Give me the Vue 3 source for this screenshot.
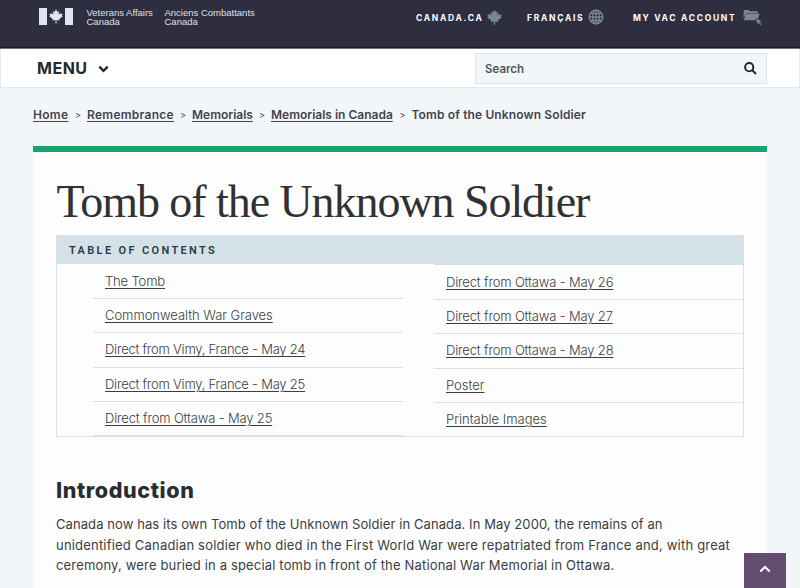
<template>
  <div class="page">
    <header class="top-bar">
      <div class="brand">
        <svg class="flag" viewBox="0 0 34 17" aria-hidden="true">
          <path d="M0 0h8v17H0zM26 0h8v17h-8z" />
          <path :d="leaf" transform="translate(10.3 1.2) scale(.56)" />
        </svg>
        <span class="brand-en">Veterans Affairs<br />Canada</span>
        <span class="brand-fr">Anciens Combattants<br />Canada</span>
      </div>
      <nav class="top-links">
        <a href="#" class="link-canada">
          <span>CANADA.CA</span>
          <svg class="icon-leaf" viewBox="0 0 24 26" aria-hidden="true"><path :d="leaf" /></svg>
        </a>
        <a href="#" class="link-lang">
          <span>FRANÇAIS</span>
          <svg class="icon-globe" viewBox="0 0 16 16" aria-hidden="true">
            <circle cx="8" cy="8" r="6.8" />
            <ellipse cx="8" cy="8" rx="3.4" ry="6.8" />
            <path d="M8 1v14M1 8h14M2.2 4.6h11.6M2.2 11.4h11.6" />
          </svg>
        </a>
        <a href="#" class="link-account">
          <span>MY VAC ACCOUNT</span>
          <svg class="icon-folder" viewBox="0 0 20 17" aria-hidden="true">
            <path d="M.6 9V2.2Q.6 1 1.8 1h3.6l1.2 1.3h7q1 0 1 1v.8H4.2q-1 0-1.3.9z" />
            <path d="M4.5 4.5h11.2q1 0 .7.9l-1.8 5q-.3.9-1.2.9H1.7q-1 0-.7-.9l2-5.1q.4-.8 1.5-.8z" />
            <path class="cursor" d="M12.8 9.2l6.4 2.7-2.3 1 2 2.3-1.4 1.2-2-2.4-1.3 2.1z" />
          </svg>
        </a>
      </nav>
    </header>

    <div class="menu-bar">
      <button class="menu-button" type="button">
        <span>MENU</span>
        <svg class="icon-down" viewBox="0 0 10 7" aria-hidden="true"><path d="M1.2 1.4L5 5.1l3.8-3.7" /></svg>
      </button>
      <form class="search" @submit.prevent>
        <input v-model="query" type="text" placeholder="Search" aria-label="Search" />
        <svg class="icon-search" viewBox="0 0 13 13" aria-hidden="true">
          <circle cx="5.2" cy="5.2" r="4.1" />
          <path d="M8.3 8.3l3.7 3.7" />
        </svg>
      </form>
    </div>

    <nav class="breadcrumbs">
      <template v-for="crumb in crumbs" :key="crumb.label">
        <a href="#" :class="crumb.cls">{{ crumb.label }}</a>
        <span class="separator">&gt;</span>
      </template>
      <span class="current">Tomb of the Unknown Soldier</span>
    </nav>

    <main class="content">
      <h1>Tomb of the Unknown Soldier</h1>
      <section class="toc">
        <h2>TABLE OF CONTENTS</h2>
        <div class="toc-columns">
          <ul v-for="(column, i) in toc" :key="i">
            <li v-for="item in column" :key="item.label" :class="item.cls"><a href="#">{{ item.label }}</a></li>
          </ul>
        </div>
      </section>
      <h2 class="intro-title">Introduction</h2>
      <p class="intro">
        <span class="line-1">Canada now has its own Tomb of the Unknown Soldier in Canada. In May 2000, the remains of an</span>
        <span class="line-2">unidentified Canadian soldier who died in the First World War were repatriated from France and, with great</span>
        <span class="line-3">ceremony, were buried in a special tomb in front of the National War Memorial in Ottawa.</span>
      </p>
    </main>

    <a href="#" class="to-top" aria-label="Back to top">
      <svg viewBox="0 0 12 8" aria-hidden="true"><path d="M1.2 6.4L6 1.9l4.8 4.5" /></svg>
    </a>
  </div>
</template>

<script setup>
import { ref } from 'vue';

const query = ref('');

const leaf =
  'M12 0l2.5 4.8 3-1.4-1.3 6.5 3.2-3.2.8 2 3.6-.6-1.3 3.8 1.5.9-6.4 5.1.8 2.4-5.6-.9.1 6.1h-1.8l.1-6.1-5.6.9.8-2.4L0 12.8l1.5-.9L.2 8.1l3.6.6.8-2 3.2 3.2-1.3-6.5 3 1.4z';

const crumbs = [
  { label: 'Home', cls: 'crumb-home' },
  { label: 'Remembrance', cls: 'crumb-remembrance' },
  { label: 'Memorials', cls: 'crumb-memorials' },
  { label: 'Memorials in Canada', cls: 'crumb-canada' },
];

const toc = [
  [
    { label: 'The Tomb', cls: 'tomb' },
    { label: 'Commonwealth War Graves', cls: 'graves' },
    { label: 'Direct from Vimy, France - May 24', cls: 'vimy' },
    { label: 'Direct from Vimy, France - May 25', cls: 'vimy' },
    { label: 'Direct from Ottawa - May 25', cls: 'ottawa' },
  ],
  [
    { label: 'Direct from Ottawa - May 26', cls: 'ottawa' },
    { label: 'Direct from Ottawa - May 27', cls: 'ottawa' },
    { label: 'Direct from Ottawa - May 28', cls: 'ottawa' },
    { label: 'Poster', cls: 'poster' },
    { label: 'Printable Images', cls: 'images' },
  ],
];
</script>

<style>
body {
  background: #f2f6f9;
  overflow: hidden;
}
</style>

<style scoped>
.page {
  height: 588px;
  overflow: hidden;
  font-family: Inter, 'Liberation Sans', sans-serif;
  color: #3a3d3f;
}

a {
  color: inherit;
}

.top-bar {
  display: flex;
  justify-content: space-between;
  box-sizing: border-box;
  height: 49px;
  padding: 8px 37px 0 39px;
  background: #2f2e41;
  border-bottom: 1px solid #6f707c;
  box-shadow: inset 0 -1px #1c1b2b;
}

.brand {
  display: flex;
  font: 9.5px/9px 'Liberation Sans', sans-serif;
  color: #dce1ea;
}

.flag {
  width: 34px;
  height: 17px;
  margin-right: 13.5px;
  fill: #dfe7ec;
}

.brand-en {
  width: 78px;
}

.top-links {
  display: flex;
}

.top-links a {
  display: flex;
  align-items: center;
  height: 18px;
  font-size: 8.5px;
  font-weight: 700;
  letter-spacing: 1.7px;
  color: #fff;
  text-decoration: none;
  white-space: nowrap;
}

.top-links svg {
  flex: none;
  fill: #7c8796;
}

.link-canada {
  width: 111px;
}

.link-lang {
  width: 106px;
}

.top-links span {
  padding-top: 1px;
}

.link-canada span {
  width: 71px;
}

.link-lang span {
  width: 60.5px;
}

.link-account span {
  width: 110px;
}

.top-links .icon-leaf {
  width: 15px;
  height: 15px;
  stroke: #7c8796;
  stroke-width: 0.8;
}

.top-links .icon-globe {
  width: 16px;
  height: 16px;
  fill: none;
  stroke: #7c8796;
  stroke-width: 1.3;
}

.icon-folder {
  width: 20px;
  height: 17px;
}

.icon-folder .cursor {
  stroke: #2f2e41;
  stroke-width: 0.6;
}

.menu-bar {
  display: flex;
  align-items: center;
  justify-content: space-between;
  box-sizing: border-box;
  height: 39px;
  padding: 0 32px 0 36px;
  background: #fff;
  border: solid #e1eaf0;
  border-width: 0 1px 1px;
}

.menu-button {
  display: flex;
  align-items: center;
  gap: 10.5px;
  padding: 0;
  border: 0;
  background: none;
  font: 700 16px Inter, sans-serif;
  letter-spacing: 0.5px;
  color: #26292c;
}

.icon-down {
  width: 11px;
  height: 8px;
  margin-top: 1px;
  fill: none;
  stroke: #26292c;
  stroke-width: 2.2;
}

.search {
  display: flex;
  align-items: center;
  box-sizing: border-box;
  width: 292px;
  height: 31px;
  padding: 0 9px;
  background: #f2f6f9;
  border: 1px solid #dbe4ea;
}

.search input {
  flex: 1;
  min-width: 0;
  padding: 2px 0 0;
  border: 0;
  outline: 0;
  background: none;
  font: 600 11.5px Inter, sans-serif;
}

.search input::placeholder {
  color: #505459;
  opacity: 1;
}

.icon-search {
  width: 13px;
  height: 13px;
  fill: none;
  stroke: #26292c;
  stroke-width: 2;
}

.breadcrumbs {
  display: flex;
  align-items: center;
  height: 16px;
  padding: 19px 33px 0;
  font-size: 12px;
  line-height: 16px;
  font-weight: 600;
  color: #43434f;
  white-space: nowrap;
}

.breadcrumbs a {
  text-decoration-thickness: 1px;
  text-underline-offset: 2px;
}

.crumb-home {
  width: 36px;
  letter-spacing: 0.3px;
}

.crumb-remembrance {
  width: 87px;
  letter-spacing: 0.27px;
}

.crumb-memorials {
  width: 61px;
}

.crumb-canada {
  width: 122.5px;
}

.current {
  letter-spacing: 0.13px;
}

.separator {
  width: 18px;
  font-size: 9px;
  font-weight: 400;
  text-align: center;
}

.content {
  box-sizing: border-box;
  height: 460px;
  margin: 23px 33px 0;
  padding: 0 23px;
  background: #fdfdfd;
  border-top: 6px solid #1aa46d;
}

h1 {
  margin: 0;
  padding: 24px 0 0 0.5px;
  height: 59px;
  font: 400 46px/52px 'Liberation Serif', serif;
  letter-spacing: -1.06px;
  color: #303133;
  white-space: nowrap;
}

.toc {
  box-sizing: border-box;
  width: 688px;
  height: 202px;
  border: 1px solid #d8e1e6;
}

.toc h2 {
  margin: 0;
  padding-left: 12px;
  height: 28px;
  background: #d5e1e9;
  font: 600 11px/29px Roboto, sans-serif;
  letter-spacing: 2.35px;
  color: #2c3943;
}

.toc-columns {
  display: grid;
  grid-template-columns: 310px 309px;
  gap: 31px;
  padding-left: 36px;
}

.toc ul {
  margin: 0;
  padding: 0.5px 0 0;
  list-style: none;
}

.toc ul + ul {
  border-top: 1px solid #d5dde2;
}

.toc li {
  box-sizing: border-box;
  height: 34.4px;
  padding-left: 12px;
  border-bottom: 1px solid #dadfe3;
  font-size: 13px;
  line-height: 32px;
  font-weight: 300;
  white-space: nowrap;
}

.toc ul + ul li:last-child {
  border-bottom: 0;
}

.toc a {
  text-decoration-thickness: 1px;
  text-underline-offset: 2px;
}

.toc .tomb {
  letter-spacing: -0.15px;
}

.toc .graves {
  letter-spacing: -0.04px;
}

.toc .vimy {
  letter-spacing: -0.23px;
}

.toc .ottawa {
  letter-spacing: -0.16px;
}

.intro-title {
  margin: 39px 0 0;
  font-size: 21.5px;
  line-height: 28px;
  font-weight: 800;
  letter-spacing: 0.6px;
  color: #292c30;
}

.intro {
  margin: 10px 0 0;
  font-size: 13px;
  line-height: 20.5px;
  white-space: nowrap;
}

.intro span {
  display: block;
}

.line-1 {
  letter-spacing: 0.085px;
}

.line-2 {
  letter-spacing: 0.195px;
}

.line-3 {
  letter-spacing: 0.165px;
}

.to-top {
  position: fixed;
  right: 14px;
  bottom: 0;
  display: flex;
  justify-content: center;
  width: 42px;
  height: 35px;
  background: #634d6f;
}

.to-top svg {
  width: 12px;
  height: 8px;
  margin-top: 12px;
  fill: none;
  stroke: #fff;
  stroke-width: 2;
}
</style>
